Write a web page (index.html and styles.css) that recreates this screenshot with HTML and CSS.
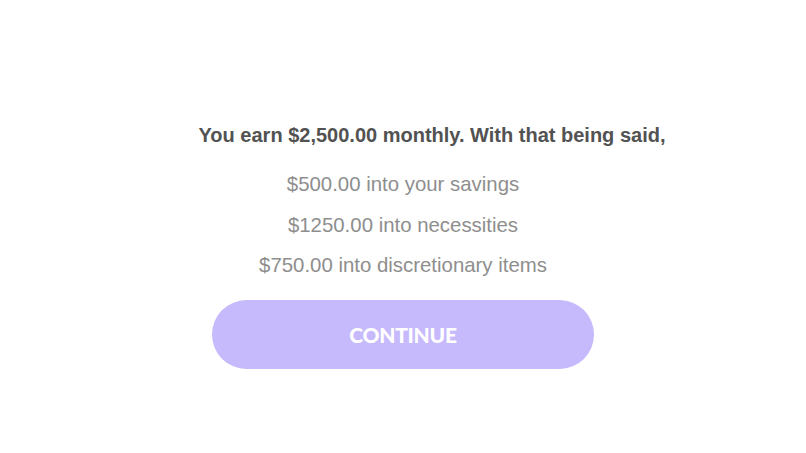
FILE: index.html
```html
<!DOCTYPE html>
<html lang="en">
<head>
  <meta charset="UTF-8" />
  <meta name="viewport" content="width=device-width, initial-scale=1.0" />
  <title>Budget Summary</title>
  <link rel="stylesheet" href="styles.css">
</head>
<body>
  <div class="summary">
    <h1 class="summary-title">You earn $2,500.00 monthly. With that being said,</h1>
    <ul class="split-list">
      <li>$500.00 into your savings</li>
      <li>$1250.00 into necessities</li>
      <li>$750.00 into discretionary items</li>
    </ul>
    <button class="continue-btn" type="button">CONTINUE</button>
  </div>
</body>
</html>
```

FILE: styles.css
```css
* {
  margin: 0;
  padding: 0;
  box-sizing: border-box;
}
html, body {
  height: 100%;
  overflow: hidden;
}
body {
  background: #fff;
  font-family: 'Liberation Sans', Arial, sans-serif;
}
.summary {
  display: flex;
  flex-direction: column;
  align-items: center;
  padding-top: 121px;
}
.summary-title {
  font-size: 20px;
  font-weight: bold;
  color: #525252;
  padding-left: 58px;
  line-height: 28px;
}
.split-list {
  list-style: none;
  text-align: center;
  margin-top: 15px;
}
.split-list li {
  font-size: 20.4px;
  color: #8e8e8e;
  line-height: 40.5px;
}
.continue-btn {
  margin-top: 14px;
  width: 382px;
  height: 69px;
  border: none;
  border-radius: 35px;
  background: #c6b9fc;
  color: #fff;
  font-family: Lato, 'Open Sans', sans-serif;
  font-weight: 900;
  font-size: 21px;
  letter-spacing: -0.3px;
  cursor: pointer;
}
```
